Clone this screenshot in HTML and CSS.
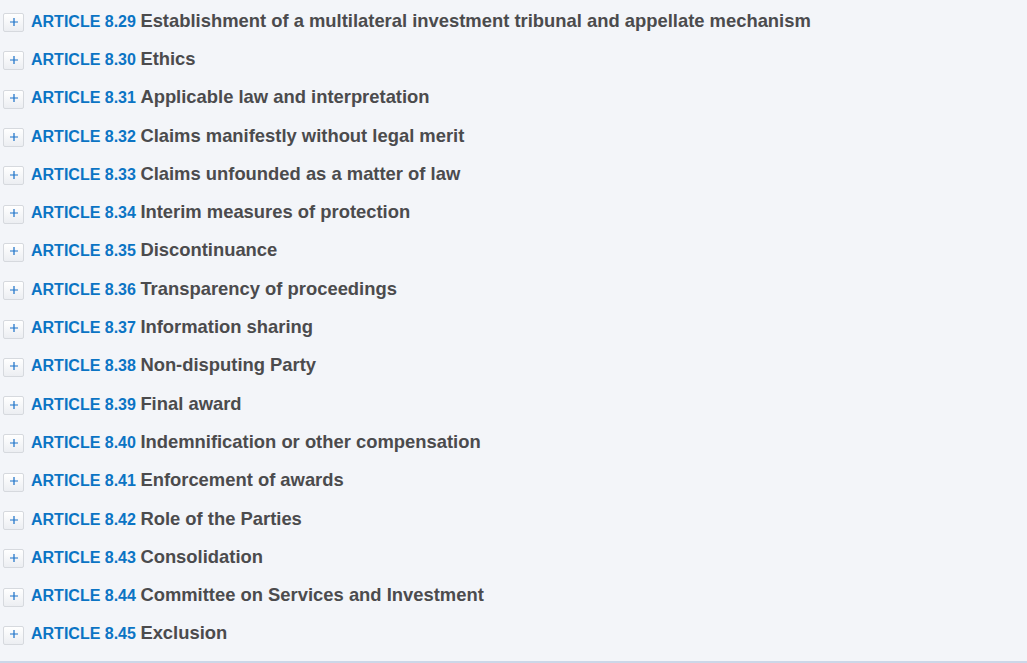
FILE: index.html
```
<!DOCTYPE html>
<html>
<head>
<meta charset="utf-8">
<link rel="stylesheet" href="styles.css">
</head>
<body>
<div class="toc">
  <div class="row"><span class="btn"><svg class="plus" viewBox="0 0 9 9"><path d="M4.5 0V9M0 4.5H9"/></svg></span><span class="text"><span class="label">ARTICLE 8.29</span> <span class="title">Establishment of a multilateral investment tribunal and appellate mechanism</span></span></div>
  <div class="row"><span class="btn"><svg class="plus" viewBox="0 0 9 9"><path d="M4.5 0V9M0 4.5H9"/></svg></span><span class="text"><span class="label">ARTICLE 8.30</span> <span class="title">Ethics</span></span></div>
  <div class="row"><span class="btn"><svg class="plus" viewBox="0 0 9 9"><path d="M4.5 0V9M0 4.5H9"/></svg></span><span class="text"><span class="label">ARTICLE 8.31</span> <span class="title">Applicable law and interpretation</span></span></div>
  <div class="row"><span class="btn"><svg class="plus" viewBox="0 0 9 9"><path d="M4.5 0V9M0 4.5H9"/></svg></span><span class="text"><span class="label">ARTICLE 8.32</span> <span class="title">Claims manifestly without legal merit</span></span></div>
  <div class="row"><span class="btn"><svg class="plus" viewBox="0 0 9 9"><path d="M4.5 0V9M0 4.5H9"/></svg></span><span class="text"><span class="label">ARTICLE 8.33</span> <span class="title">Claims unfounded as a matter of law</span></span></div>
  <div class="row"><span class="btn"><svg class="plus" viewBox="0 0 9 9"><path d="M4.5 0V9M0 4.5H9"/></svg></span><span class="text"><span class="label">ARTICLE 8.34</span> <span class="title">Interim measures of protection</span></span></div>
  <div class="row"><span class="btn"><svg class="plus" viewBox="0 0 9 9"><path d="M4.5 0V9M0 4.5H9"/></svg></span><span class="text"><span class="label">ARTICLE 8.35</span> <span class="title">Discontinuance</span></span></div>
  <div class="row"><span class="btn"><svg class="plus" viewBox="0 0 9 9"><path d="M4.5 0V9M0 4.5H9"/></svg></span><span class="text"><span class="label">ARTICLE 8.36</span> <span class="title">Transparency of proceedings</span></span></div>
  <div class="row"><span class="btn"><svg class="plus" viewBox="0 0 9 9"><path d="M4.5 0V9M0 4.5H9"/></svg></span><span class="text"><span class="label">ARTICLE 8.37</span> <span class="title">Information sharing</span></span></div>
  <div class="row"><span class="btn"><svg class="plus" viewBox="0 0 9 9"><path d="M4.5 0V9M0 4.5H9"/></svg></span><span class="text"><span class="label">ARTICLE 8.38</span> <span class="title">Non-disputing Party</span></span></div>
  <div class="row"><span class="btn"><svg class="plus" viewBox="0 0 9 9"><path d="M4.5 0V9M0 4.5H9"/></svg></span><span class="text"><span class="label">ARTICLE 8.39</span> <span class="title">Final award</span></span></div>
  <div class="row"><span class="btn"><svg class="plus" viewBox="0 0 9 9"><path d="M4.5 0V9M0 4.5H9"/></svg></span><span class="text"><span class="label">ARTICLE 8.40</span> <span class="title">Indemnification or other compensation</span></span></div>
  <div class="row"><span class="btn"><svg class="plus" viewBox="0 0 9 9"><path d="M4.5 0V9M0 4.5H9"/></svg></span><span class="text"><span class="label">ARTICLE 8.41</span> <span class="title">Enforcement of awards</span></span></div>
  <div class="row"><span class="btn"><svg class="plus" viewBox="0 0 9 9"><path d="M4.5 0V9M0 4.5H9"/></svg></span><span class="text"><span class="label">ARTICLE 8.42</span> <span class="title">Role of the Parties</span></span></div>
  <div class="row"><span class="btn"><svg class="plus" viewBox="0 0 9 9"><path d="M4.5 0V9M0 4.5H9"/></svg></span><span class="text"><span class="label">ARTICLE 8.43</span> <span class="title">Consolidation</span></span></div>
  <div class="row"><span class="btn"><svg class="plus" viewBox="0 0 9 9"><path d="M4.5 0V9M0 4.5H9"/></svg></span><span class="text"><span class="label">ARTICLE 8.44</span> <span class="title">Committee on Services and Investment</span></span></div>
  <div class="row"><span class="btn"><svg class="plus" viewBox="0 0 9 9"><path d="M4.5 0V9M0 4.5H9"/></svg></span><span class="text"><span class="label">ARTICLE 8.45</span> <span class="title">Exclusion</span></span></div>
</div>
</body>
</html>
```
FILE: styles.css
```
html, body {
  margin: 0;
  padding: 0;
  background: #f3f5f9;
}
body {
  font-family: "Liberation Sans", Arial, sans-serif;
  font-size: 16px;
}
.toc {
  padding-top: 2px;
  height: 663px;
  box-sizing: border-box;
  border-bottom: 2px solid #ccd7e8;
}
.row {
  height: 38.3px;
  display: flex;
  align-items: center;
  padding-left: 3px;
}
.btn {
  width: 19px;
  height: 17px;
  margin-top: 3px;
  margin-right: 7px;
  border: 1px solid #d6d9de;
  border-radius: 2px;
  background: linear-gradient(#ffffff, #eceef2);
  display: flex;
  align-items: center;
  justify-content: center;
  flex: none;
}
.plus {
  width: 8px;
  height: 8px;
  margin-top: -2px;
}
.plus path {
  stroke: #1f74c9;
  stroke-width: 1.4;
  fill: none;
}
.text {
  white-space: pre;
  line-height: 20px;
}
.label {
  color: #0b74c4;
  font-weight: bold;
  font-size: 16px;
}
.title {
  color: #4b4b4d;
  font-weight: bold;
  font-size: 18.4px;
}
```
